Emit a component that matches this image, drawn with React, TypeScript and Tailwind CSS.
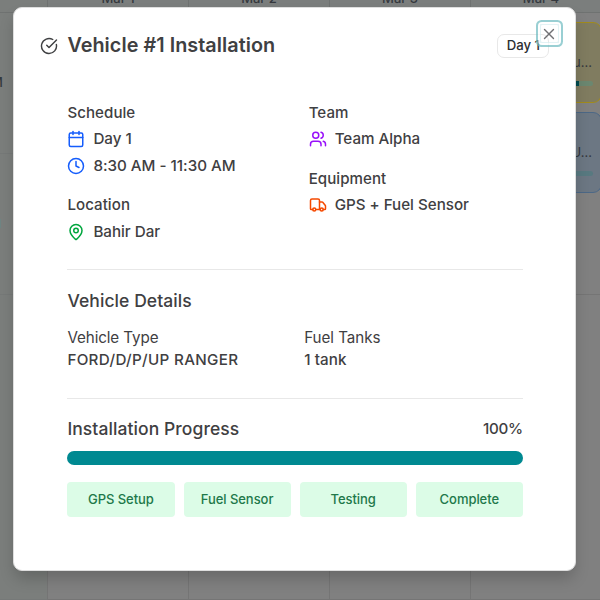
import type { ReactNode } from "react";
import { Calendar, Clock, MapPin, Users, Truck, CircleCheckBig, X } from "lucide-react";

const days = ["Mar 1", "Mar 2", "Mar 3", "Mar 4"];

function Schedule() {
  return (
    <div className="grid h-[600px] w-[611px] grid-cols-[47px_repeat(4,141px)] grid-rows-[13px_141px_141px_305px] text-[#34383d]">
      <div className="border-b border-[#6f7271] bg-[#7b7e7c]" />
      {days.map((d) => (
        <div key={d} className="flex items-end justify-center border-b border-l border-[#6f7271] bg-[#7b7e7d]">
          <span className="mb-[6px] text-[13px] leading-[16px] font-medium">{d}</span>
        </div>
      ))}
      {[0, 1, 2].map((row) => (
        <div key={row} className="contents">
          <div className="flex flex-col border-b border-[#767978] bg-[#7b7e7c]">
            {row === 0 && <span className="mt-[60px] ml-[-9px] text-[13px] leading-[18px] font-medium">M</span>}
            {row === 1 && <span className="mt-[65px] h-[9px] w-px bg-[#6f8583]" />}
          </div>
          {days.map((d, col) => (
            <div key={d} className="border-b border-l border-[#757575] bg-[#808080]">
              {row === 0 && col === 3 && (
                <div className="relative z-10 ml-[5px] flex w-[126px] flex-col gap-[9px] pt-[9px]">
                  <Job className="border-[#a18b1d] bg-[#807c60]" text="u..." track="bg-[#6b8770]" fill="bg-[#004a4e]" />
                  <Job className="border-[#4c6886] bg-[#6c7783]" text="U..." track="bg-[#587980]" fill="bg-[#587980]" />
                </div>
              )}
            </div>
          ))}
        </div>
      ))}
    </div>
  );
}

function Job({ className, text, track, fill }: { className: string; text: string; track: string; fill: string }) {
  return (
    <div className={`flex h-[81px] shrink-0 flex-col rounded-[9px] border pr-[9px] ${className}`}>
      <span className="mt-[30px] self-end text-[13px] leading-[18px]">{text}</span>
      <span className={`mt-[10px] ml-[9px] flex h-[5px] w-[107px] shrink-0 overflow-hidden rounded-full ${track}`}>
        <span className={`h-full w-[93px] ${fill}`} />
      </span>
    </div>
  );
}

function Label({ children }: { children: ReactNode }) {
  return <h4 className="h-[22px] text-[15.1px] leading-[22px] font-medium tracking-[0.05px]">{children}</h4>;
}

function Item({ icon, children }: { icon: ReactNode; children: ReactNode }) {
  return (
    <div className="flex h-[22px] items-center gap-[8px] text-[15.2px] leading-[22px] font-medium tracking-[-0.02px] whitespace-nowrap">
      {icon}
      {children}
    </div>
  );
}

const steps = ["GPS Setup", "Fuel Sensor", "Testing", "Complete"];

export default function App() {
  return (
    <main className="relative h-[600px] w-[600px] overflow-hidden bg-[#808080] font-['Inter','Liberation_Sans',sans-serif] text-[#3f4042]">
      <Schedule />
      <section
        role="dialog"
        className="absolute top-[7px] left-[13.4px] z-20 h-[564px] w-[563px] rounded-[9px] border border-[#dedede] bg-white pt-[26px] shadow-[0_9px_16px_-2px_rgba(0,0,0,0.2)]"
      >
        <header className="flex h-[23px] items-center pr-[26px] pl-[26px]">
          <CircleCheckBig size={18} strokeWidth={1.9} />
          <h2 className="ml-[9px] text-[19.8px] leading-[23px] font-semibold tracking-[0.05px] whitespace-nowrap">Vehicle #1 Installation</h2>
          <span className="ml-auto flex h-[24px] w-[52px] items-center justify-center rounded-[7px] border border-[#e8e8e8] text-[13.2px] leading-none font-medium whitespace-nowrap text-[#2c2d30]">
            Day 1
          </span>
        </header>
        <div className="pr-[52.5px] pl-[53px] pt-[45px]">
          <div className="grid h-[168px] grid-cols-2 gap-x-[27px] border-b border-[#e8e8e8]">
            <div className="flex flex-col">
              <Label>Schedule</Label>
              <div className="mt-[4px] flex flex-col gap-[5px]">
                <Item icon={<Calendar size={18} className="text-[#155dfc]" />}>Day 1</Item>
                <Item icon={<Clock size={18} className="text-[#155dfc]" />}>8:30 AM - 11:30 AM</Item>
              </div>
              <div className="mt-[17px] flex flex-col gap-[5px]">
                <Label>Location</Label>
                <Item icon={<MapPin size={18} className="text-[#00a63e]" />}>Bahir Dar</Item>
              </div>
            </div>
            <div className="flex flex-col">
              <Label>Team</Label>
              <div className="mt-[4px]">
                <Item icon={<Users size={18} className="text-[#9810fa]" />}>Team Alpha</Item>
              </div>
              <div className="mt-[18px] flex flex-col gap-[4px]">
                <Label>Equipment</Label>
                <Item icon={<Truck size={18} className="text-[#f54900]" />}>GPS + Fuel Sensor</Item>
              </div>
            </div>
          </div>
          <div className="h-[129px] border-b border-[#e8e8e8] pt-[18px]">
            <h3 className="text-[17.5px] leading-[26px] font-medium tracking-[0.08px]">Vehicle Details</h3>
            <div className="mt-[13px] grid grid-cols-2 gap-x-[18px] text-[15.2px] leading-[22px]">
              <span className="tracking-[-0.1px]">Vehicle Type</span>
              <span className="tracking-[-0.05px]">Fuel Tanks</span>
              <span className="font-medium tracking-[0.32px] whitespace-nowrap">FORD/D/P/UP RANGER</span>
              <span className="font-medium tracking-[0.1px]">1 tank</span>
            </div>
          </div>
          <div className="pt-[17px]">
            <div className="flex h-[26px] items-center justify-between">
              <h3 className="text-[17.5px] leading-[26px] font-medium tracking-[0.08px]">Installation Progress</h3>
              <span className="text-[15.2px] font-medium tracking-[-0.3px]">100%</span>
            </div>
            <div className="mt-[9px] h-[14px] rounded-full bg-[#008991]" />
            <div className="mt-[17px] grid grid-cols-4 gap-[9px]">
              {steps.map((s) => (
                <div
                  key={s}
                  className="flex h-[35px] items-center justify-center rounded-[4px] bg-[#dcfce7] text-[13px] font-medium tracking-[-0.05px] whitespace-nowrap text-[#21784a]"
                >
                  {s}
                </div>
              ))}
            </div>
          </div>
        </div>
        <button className="absolute top-[16px] right-[16px] flex size-[19px] items-center justify-center rounded-[2px] border border-[#d8eff1] opacity-70 shadow-[0_0_0_2px_white,0_0_0_4px_#6ebcc1]">
          <X size={18} strokeWidth={1.8} className="mr-[1px] shrink-0 text-[#34363a]" />
        </button>
      </section>
    </main>
  );
}
